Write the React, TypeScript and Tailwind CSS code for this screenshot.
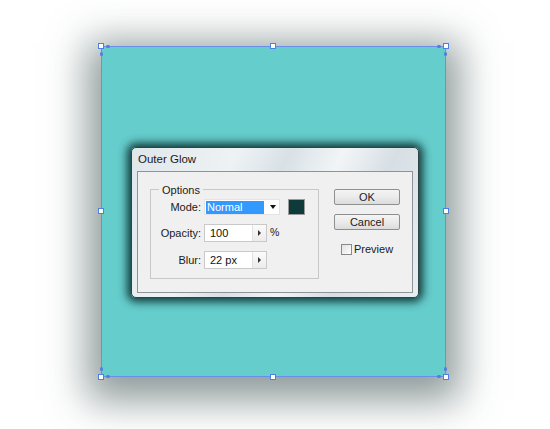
import React from 'react'

const font = { fontFamily: '"Liberation Sans", Arial, sans-serif' }

function Handle({ className }: { className: string }) {
  return <div className={`absolute h-[6px] w-[6px] border border-[#4f7fe0] bg-white ${className}`} />
}

function Spin({ value }: { value: string }) {
  return (
    <div className="flex h-[18px] w-[63px] border border-[#c9c9c9] bg-white">
      <div className="flex flex-1 items-center pl-[5px] text-[11px] text-[#111]">{value}</div>
      <div className="flex w-[14px] items-center justify-center border-l border-[#e2e2e2] bg-gradient-to-b from-[#fbfbfb] to-[#ececec]">
        <div className="h-0 w-0 border-y-[3px] border-l-[3px] border-y-transparent border-l-[#333]" />
      </div>
    </div>
  )
}

function Btn({ label }: { label: string }) {
  return (
    <div className="flex h-[16px] w-[66px] items-center justify-center rounded-[2px] border border-[#8e8f8f] bg-gradient-to-b from-[#f4f4f4] via-[#ebebeb] to-[#dcdcdc] text-[11px] text-[#222]">
      {label}
    </div>
  )
}

export default function App() {
  return (
    <div className="h-[429px] w-[550px] overflow-hidden bg-white pl-[101px] pt-[46px]" style={font}>
      <div className="relative h-[331px] w-[345px] border border-[#6b8fe6] bg-[#65cdcc] pl-[29px] pt-[100px] shadow-[0_10px_36px_14px_rgba(55,75,75,0.55)]">
        <Handle className="-left-[4px] -top-[4px]" />
        <Handle className="left-[168px] -top-[4px]" />
        <Handle className="-right-[4px] -top-[4px]" />
        <Handle className="-left-[4px] top-[161px]" />
        <Handle className="-right-[4px] top-[161px]" />
        <Handle className="-bottom-[4px] -left-[4px]" />
        <Handle className="-bottom-[4px] left-[168px]" />
        <Handle className="-bottom-[4px] -right-[4px]" />
        <div className="absolute left-[4px] top-[-2px] h-[3px] w-[4px] rounded-full bg-[#4f7fe0]" />
        <div className="absolute left-[-2px] top-[5px] h-[4px] w-[3px] rounded-full bg-[#4f7fe0]" />
        <div className="absolute right-[4px] top-[-2px] h-[3px] w-[4px] rounded-full bg-[#4f7fe0]" />
        <div className="absolute right-[-2px] top-[5px] h-[4px] w-[3px] rounded-full bg-[#4f7fe0]" />
        <div className="absolute bottom-[-2px] left-[4px] h-[3px] w-[4px] rounded-full bg-[#4f7fe0]" />
        <div className="absolute bottom-[5px] left-[-2px] h-[4px] w-[3px] rounded-full bg-[#4f7fe0]" />
        <div className="absolute bottom-[-2px] right-[4px] h-[3px] w-[4px] rounded-full bg-[#4f7fe0]" />
        <div className="absolute bottom-[5px] right-[-2px] h-[4px] w-[3px] rounded-full bg-[#4f7fe0]" />

        {/* dialog */}
        <div className="flex h-[151px] w-[288px] flex-col rounded-[5px] border border-[#2f4545] bg-[linear-gradient(115deg,#dfe6ea_0%,#eef2f4_30%,#d9e1e6_45%,#f2f5f7_60%,#d7dfe4_75%,#e9eef1_100%)] px-[5px] pb-[4px] shadow-[0_0_9px_4px_rgba(5,35,35,0.85)]">
          <div className="flex h-[23px] items-center pl-[1px] text-[11.5px] text-[#1a1a1a]">Outer Glow</div>
          <div className="flex flex-1 border border-[#8d9396] bg-[#f0f0f0] pl-[12px] pt-[17px]">
            {/* options group */}
            <div className="relative h-[90px] w-[169px] border border-[#c8c8c8] pl-[9px] pt-[9px]">
              <span className="absolute -top-[8px] left-[8px] bg-[#f0f0f0] px-[3px] text-[11px] text-[#1a1a1a]">Options</span>
              <div className="flex flex-col gap-[9px]">
                <div className="flex h-[16px] items-center">
                  <div className="w-[44px] pr-[3px] text-right text-[11px] text-[#1a1a1a]">Mode:</div>
                  <div className="flex h-[16px] w-[76px] items-center border border-[#e4e4e4] bg-white pl-[1px]">
                    <div className="flex h-[13px] w-[58px] items-center bg-[#3399ff] pl-[1px] text-[11px] text-white">Normal</div>
                    <div className="ml-[6px] h-0 w-0 border-x-[3.5px] border-t-[4px] border-x-transparent border-t-[#111]" />
                  </div>
                  <div className="ml-[8px] h-[16px] w-[17px] border border-[#9a9a9a] bg-[#0f3a3a]" />
                </div>
                <div className="flex items-center">
                  <div className="w-[44px] pr-[3px] text-right text-[11px] text-[#1a1a1a]">Opacity:</div>
                  <Spin value="100" />
                  <span className="ml-[3px] text-[10.5px] text-[#1a1a1a]">%</span>
                </div>
                <div className="flex items-center">
                  <div className="w-[44px] pr-[3px] text-right text-[11px] text-[#1a1a1a]">Blur:</div>
                  <Spin value="22 px" />
                </div>
              </div>
            </div>
            {/* buttons */}
            <div className="ml-[15px] flex flex-col">
              <Btn label="OK" />
              <div className="mt-[9px]"><Btn label="Cancel" /></div>
              <div className="mt-[11px] flex items-center pl-[7px]">
                <div className="h-[11px] w-[11px] border border-[#8a8a8a] bg-gradient-to-br from-[#e0e0e0] to-white" />
                <span className="ml-[2px] text-[11px] text-[#1a1a1a]">Preview</span>
              </div>
            </div>
          </div>
        </div>
      </div>
    </div>
  )
}
